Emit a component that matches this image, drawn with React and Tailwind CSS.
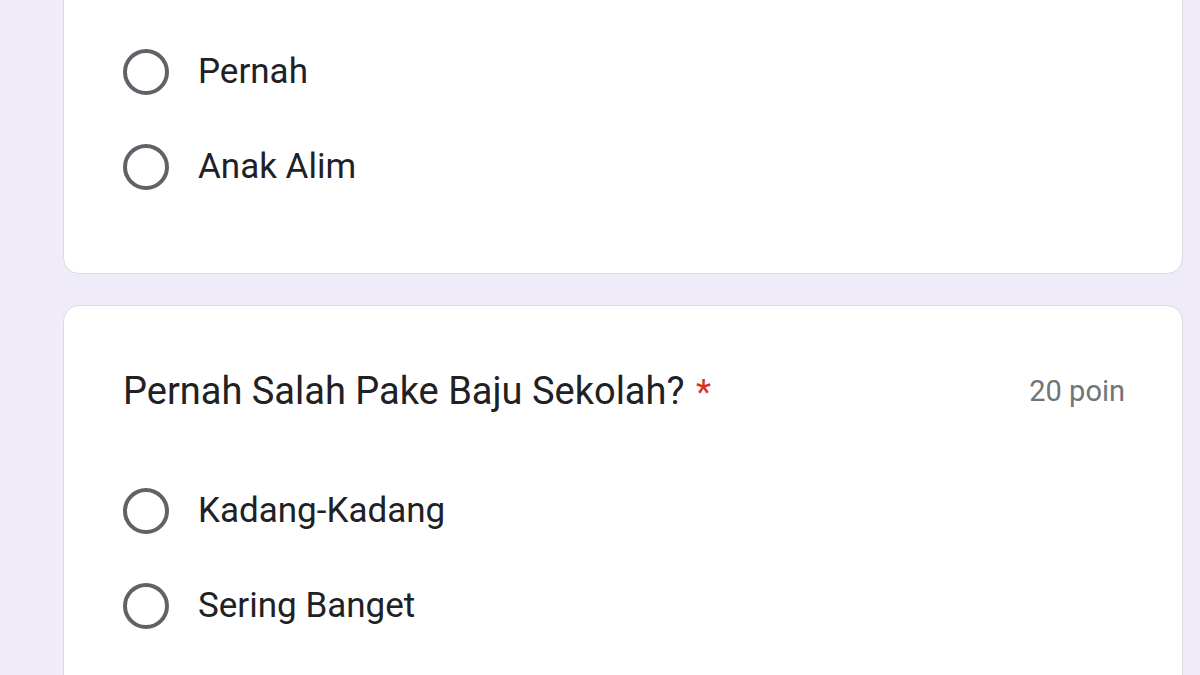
import React from 'react';

const Option = ({ label }) => (
    <div className="flex items-center h-[95px]">
        <div className="w-[46px] h-[46px] rounded-full border-[4px] border-[#5f6368] shrink-0"></div>
        <span className="ml-[29px] text-[35px] text-[#202124] leading-none">{label}</span>
    </div>
);

export default function App() {
    return (
        <div
            className="w-[1200px] h-[675px] overflow-hidden bg-[#f0ebf8] pl-[63px] pr-[17px]"
            style={{ fontFamily: 'Roboto, "Noto Sans", sans-serif' }}
        >
            {/* Previous question card (cut off at top) */}
            <div className="mt-[-37px] bg-white border border-[#dadce0] rounded-[16px] pt-[60px] pb-[59px] px-[59px]">
                <Option label="Pernah" />
                <Option label="Anak Alim" />
            </div>

            {/* Current question card (runs past the bottom edge) */}
            <div className="mt-[31px] bg-white border border-[#dadce0] rounded-[16px] pt-[61px] pb-[120px] pl-[59px] pr-[57px]">
                <div className="flex items-center justify-between h-[48px]">
                    <div className="text-[38px] text-[#202124] leading-none">
                        Pernah Salah Pake Baju Sekolah?{' '}
                        <span className="ml-[2px] text-[35px] text-[#d93025]">*</span>
                    </div>
                    <div className="text-[29px] text-[#70757a] leading-none">20 poin</div>
                </div>
                <div className="mt-[48px]">
                    <Option label="Kadang-Kadang" />
                    <Option label="Sering Banget" />
                </div>
            </div>
        </div>
    );
}
